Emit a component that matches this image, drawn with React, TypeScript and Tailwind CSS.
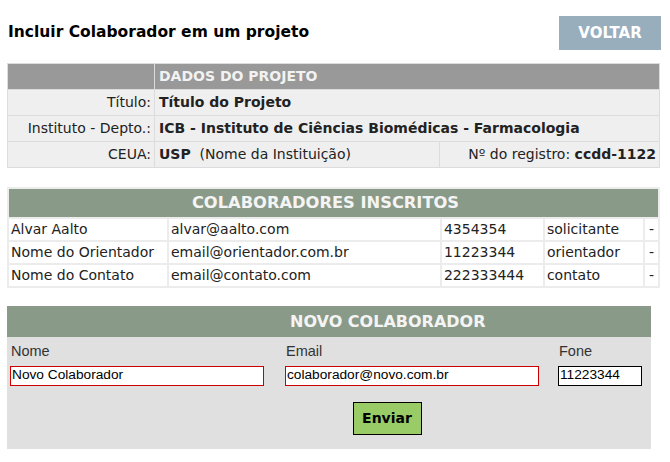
import React from 'react'

const verdana = { fontFamily: '"DejaVu Sans", Verdana, sans-serif' }
const arial = { fontFamily: '"Liberation Sans", Arial, sans-serif' }

const colaboradores = [
  { nome: 'Alvar Aalto', email: 'alvar@aalto.com', fone: '4354354', papel: 'solicitante' },
  { nome: 'Nome do Orientador', email: 'email@orientador.com.br', fone: '11223344', papel: 'orientador' },
  { nome: 'Nome do Contato', email: 'email@contato.com', fone: '222333444', papel: 'contato' },
]

export default function App() {
  return (
    <div className="w-[670px] h-[462px] bg-white px-[7px] text-[#222]" style={verdana}>
      {/* cabeçalho */}
      <div className="flex items-center justify-between pt-[16px] pr-[2px]">
        <h1 className="pl-[1px] text-[15.5px] font-bold text-black">Incluir Colaborador em um projeto</h1>
        <button className="h-[34px] w-[102px] bg-[#98aebd] text-[15px] font-bold text-white">VOLTAR</button>
      </div>

      {/* dados do projeto */}
      <table className="mt-[13px] w-[653px] border-collapse text-[14px]">
        <tbody>
          <tr className="h-[26px] bg-[#999999]">
            <td className="w-[147px] border border-[#dcdcdc]"></td>
            <td colSpan={2} className="border border-[#dcdcdc] px-[4px] font-bold text-[#f2f2f2]">DADOS DO PROJETO</td>
          </tr>
          <tr className="h-[26px] bg-[#efefef]">
            <td className="border border-[#dcdcdc] px-[3px] text-right">Título:</td>
            <td colSpan={2} className="border border-[#dcdcdc] px-[4px] font-bold">Título do Projeto</td>
          </tr>
          <tr className="h-[26px] bg-[#efefef]">
            <td className="border border-[#dcdcdc] px-[3px] text-right">Instituto - Depto.:</td>
            <td colSpan={2} className="border border-[#dcdcdc] px-[4px] font-bold">ICB - Instituto de Ciências Biomédicas - Farmacologia</td>
          </tr>
          <tr className="h-[26px] bg-[#efefef]">
            <td className="border border-[#dcdcdc] px-[3px] text-right">CEUA:</td>
            <td className="w-[285px] border border-[#dcdcdc] px-[4px]">
              <b>USP</b>&nbsp; (Nome da Instituição)
            </td>
            <td className="border border-[#dcdcdc] px-[3px] text-right">
              Nº do registro: <b>ccdd-1122</b>
            </td>
          </tr>
        </tbody>
      </table>

      {/* colaboradores inscritos */}
      <table className="mt-[19px] w-[653px] border-separate border-spacing-[2px] bg-[#ececec] text-[14px]">
        <tbody>
          <tr className="h-[28px] bg-[#8a9a88]">
            <td colSpan={5} className="pr-[16px] text-center text-[16.3px] font-bold text-[#f4f4f4]">COLABORADORES INSCRITOS</td>
          </tr>
          {colaboradores.map((c) => (
            <tr key={c.nome} className="h-[21px] bg-white">
              <td className="w-[158px] px-[2px] leading-[19px]">{c.nome}</td>
              <td className="w-[271px] px-[2px] leading-[19px]">{c.email}</td>
              <td className="w-[101px] px-[2px] leading-[19px]">{c.fone}</td>
              <td className="w-[98px] px-[2px] leading-[19px]">{c.papel}</td>
              <td className="px-[4px] leading-[19px]">-</td>
            </tr>
          ))}
        </tbody>
      </table>

      {/* novo colaborador */}
      <div className="mt-[18px] w-[644px] bg-[#e0e0e0]">
        <div className="flex h-[31px] items-center bg-[#8a9a88] pl-[283px] text-[16px] font-bold text-[#f4f4f4]">
          NOVO COLABORADOR
        </div>
        <div className="flex gap-[21px] pl-[3px] pt-[4px]" style={arial}>
          <label className="flex w-[254px] flex-col gap-[3px] text-[14.5px] text-[#333]">
            <span className="pl-[1px]">Nome</span>
            <input
              defaultValue="Novo Colaborador"
              className="h-[20px] w-[254px] border border-[#cc0000] bg-white px-[1px] text-[13.7px] text-black outline-none"
            />
          </label>
          <label className="flex w-[254px] flex-col gap-[3px] text-[14.5px] text-[#333]">
            <span className="pl-[1px]">Email</span>
            <input
              defaultValue="colaborador@novo.com.br"
              className="h-[20px] w-[254px] border border-[#cc0000] bg-white px-[1px] text-[13.7px] text-black outline-none"
            />
          </label>
          <label className="ml-[-2px] flex w-[84px] flex-col gap-[3px] text-[14.5px] text-[#333]">
            <span className="pl-[1px]">Fone</span>
            <input
              defaultValue="11223344"
              className="h-[20px] w-[84px] border border-black bg-white px-[1px] text-[13.7px] text-black outline-none"
            />
          </label>
        </div>
        <div className="flex justify-center pb-[14px] pt-[16px] pl-[116px]">
          <button className="h-[33px] w-[69px] border border-black bg-[#99cc66] text-[14px] font-bold text-black">Enviar</button>
        </div>
      </div>
    </div>
  )
}
